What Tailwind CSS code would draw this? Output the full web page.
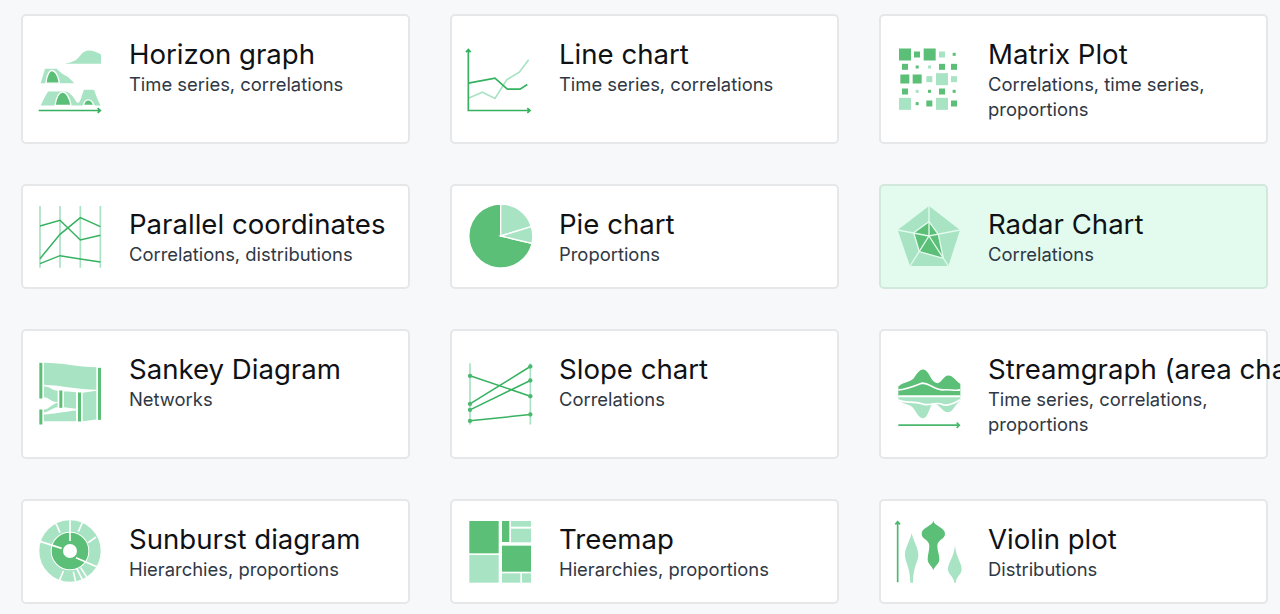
<!DOCTYPE html>
<html>
<head>
<meta charset="utf-8">
<script src="https://cdn.jsdelivr.net/npm/@tailwindcss/browser@4"></script>
</head>
<body class="bg-[#f7f8fa] overflow-hidden h-[614px] font-['Inter',sans-serif]">
<div class="grid grid-cols-[389px_389px_389px] gap-x-[40px] gap-y-[40px] pl-[21px] pt-[14px] w-[1300px]">

<div class="flex items-start gap-[21px] pl-[13px] pr-[15px] pb-[20px] bg-white border-2 border-[#e5e7e9] rounded-[5px] min-w-0">
<svg class="self-center shrink-0 w-[72px] h-[72px] -mb-[20px]" viewBox="48 97.5 216 216"><g fill="#a8e3c3"><path d="M135 160C160 155 170 150 185 130C195 118 215 115 243 132V160Z"/><path d="M62 218L75 175H110C125 190 135 195 145 200L163 218Z"/><path d="M62 285C70 270 78 250 85 243H130C150 240 160 260 170 275C180 285 185 255 192 238H222C230 260 235 275 242 285Z"/></g><g fill="#5bbf77" stroke="#fff" stroke-width="4"><path d="M78 218C80 190 90 180 95 180C105 180 115 195 118 218Z"/><path d="M105 285C110 255 120 245 128 245C140 245 150 265 153 285Z"/><path d="M190 285C193 270 200 268 205 268C212 268 218 275 222 285Z"/></g><path d="M56 300H240M233 293l8 7-8 7" fill="none" stroke="#35b160" stroke-width="5"/></svg>
<div class="min-w-0 pt-[21px]"><div class="text-[27.6px] leading-[35px] text-[#0f1115] whitespace-nowrap">Horizon graph</div><div class="text-[18.4px] leading-[25px] text-[#303844]">Time series, correlations</div></div>
</div>

<div class="flex items-start gap-[22px] pl-[13px] pr-[15px] pb-[20px] bg-white border-2 border-[#e5e7e9] rounded-[5px] min-w-0">
<svg class="self-center shrink-0 w-[72px] h-[72px] -mb-[20px]" viewBox="45 37.5 216 216"><path d="M55 203L97 185L135 204L170 148L208 125L236 88" fill="none" stroke="#a8e3c3" stroke-width="5"/><path d="M55 158L135 143L172 176H210L232 162" fill="none" stroke="#35b160" stroke-width="5"/><path d="M48 65l7-8 7 8M55 58V240H240M232 233l8 7-8 7" fill="none" stroke="#35b160" stroke-width="5"/></svg>
<div class="min-w-0 pt-[21px]"><div class="text-[27.6px] leading-[35px] text-[#0f1115] whitespace-nowrap">Line chart</div><div class="text-[18.4px] leading-[25px] text-[#303844]">Time series, correlations</div></div>
</div>

<div class="flex items-start gap-[22px] pl-[13px] pr-[15px] pb-[20px] bg-white border-2 border-[#e5e7e9] rounded-[5px] min-w-0">
<svg class="self-center shrink-0 w-[72px] h-[72px] -mb-[20px]" viewBox="42 37.5 216 216"><g fill="#5bbf77"><rect x="57" y="54" width="36" height="36"/><rect x="102" y="63" width="18" height="18"/><rect x="131" y="54" width="36" height="36"/><rect x="218" y="67" width="9" height="9"/><rect x="66" y="100" width="18" height="18"/><rect x="107" y="105" width="9" height="9"/><rect x="177" y="100" width="18" height="18"/><rect x="213" y="100" width="18" height="18"/><rect x="61" y="132" width="27" height="27"/><rect x="98" y="132" width="27" height="27"/><rect x="66" y="174" width="18" height="18"/><rect x="144" y="178" width="9" height="9"/><rect x="177" y="174" width="18" height="18"/><rect x="218" y="178" width="9" height="9"/><rect x="107" y="215" width="9" height="9"/><rect x="139" y="210" width="18" height="18"/><rect x="213" y="210" width="18" height="18"/></g><g fill="#a8e3c3"><rect x="177" y="63" width="18" height="18"/><rect x="144" y="105" width="9" height="9"/><rect x="139" y="137" width="18" height="18"/><rect x="168" y="128" width="36" height="36"/><rect x="213" y="137" width="18" height="18"/><rect x="107" y="178" width="9" height="9"/><rect x="57" y="202" width="36" height="36"/><rect x="168" y="202" width="36" height="36"/></g></svg>
<div class="min-w-0 pt-[21px]"><div class="text-[27.6px] leading-[35px] text-[#0f1115] whitespace-nowrap">Matrix Plot</div><div class="text-[18.4px] leading-[25px] text-[#303844]">Correlations, time series, proportions</div></div>
</div>

<div class="flex items-start gap-[21px] pl-[13px] pr-[15px] pb-[20px] bg-white border-2 border-[#e5e7e9] rounded-[5px] min-w-0">
<svg class="self-center shrink-0 w-[72px] h-[72px] -mb-[20px]" viewBox="48 30 216 216"><path d="M60 45V230M120 45V230M181 45V230M241 45V230" fill="none" stroke="#a8e3c3" stroke-width="5"/><path d="M60 105L120 88L181 147L241 133M60 203L120 130L181 80L241 107M60 218L120 194L181 204L241 213" fill="none" stroke="#35b160" stroke-width="4.5"/></svg>
<div class="min-w-0 pt-[21px]"><div class="text-[27.6px] leading-[35px] text-[#0f1115] whitespace-nowrap">Parallel coordinates</div><div class="text-[18.4px] leading-[25px] text-[#303844]">Correlations, distributions</div></div>
</div>

<div class="flex items-start gap-[22px] pl-[13px] pr-[15px] pb-[20px] bg-white border-2 border-[#e5e7e9] rounded-[5px] min-w-0">
<svg class="self-center shrink-0 w-[72px] h-[72px] -mb-[20px]" viewBox="45 30 216 216"><g stroke="#fff" stroke-width="4"><path d="M152 135L246 157A96 96 0 1 1 152 39Z" fill="#5bbf77"/><path d="M152 135V39A96 96 0 0 1 244 107Z" fill="#a8e3c3"/><path d="M152 135L244 107A96 96 0 0 1 246 157Z" fill="#a8e3c3"/></g></svg>
<div class="min-w-0 pt-[21px]"><div class="text-[27.6px] leading-[35px] text-[#0f1115] whitespace-nowrap">Pie chart</div><div class="text-[18.4px] leading-[25px] text-[#303844]">Proportions</div></div>
</div>

<div class="flex items-start gap-[22px] pl-[13px] pr-[15px] pb-[20px] bg-[#e2fbee] border-2 border-[#d2e8dc] rounded-[5px] min-w-0">
<svg class="self-center shrink-0 w-[72px] h-[72px] -mb-[20px]" viewBox="57 60 216 216"><path d="M162 75L255 147L220 255H105L68 147Z" fill="#a8e3c3"/><path d="M162 122L190 160L205 232L133 212L116 155Z" fill="#5bbf77" stroke="#e2fbee" stroke-width="4"/><path d="M162 75V165L255 147M162 165L220 255M162 165L105 255M162 165L68 147" fill="none" stroke="#e2fbee" stroke-width="4"/></svg>
<div class="min-w-0 pt-[21px]"><div class="text-[27.6px] leading-[35px] text-[#0f1115] whitespace-nowrap">Radar Chart</div><div class="text-[18.4px] leading-[25px] text-[#303844]">Correlations</div></div>
</div>

<div class="flex items-start gap-[21px] pl-[13px] pr-[15px] pb-[20px] bg-white border-2 border-[#e5e7e9] rounded-[5px] min-w-0">
<svg class="self-center shrink-0 w-[72px] h-[72px] -mb-[20px]" viewBox="48 22.5 216 216"><g fill="#5bbf77"><rect x="58" y="37" width="9" height="107"/><rect x="58" y="177" width="9" height="45"/><rect x="118" y="120" width="9" height="52"/><rect x="174" y="126" width="9" height="87"/><rect x="234" y="52" width="9" height="156"/></g><g fill="#a8e3c3"><path d="M72 37V103C130 105 170 118 229 118V50C170 50 130 37 72 37Z"/><path d="M72 107C95 110 95 120 113 120V155C95 155 85 140 72 140Z"/><path d="M72 178C90 175 95 160 113 157V170C95 172 90 182 72 186Z"/><path d="M72 192C100 190 130 185 168 180V212H72Z"/><path d="M132 123C145 122 155 125 168 125V175L132 170Z"/><path d="M188 127L229 121V207L188 212Z"/></g></svg>
<div class="min-w-0 pt-[21px]"><div class="text-[27.6px] leading-[35px] text-[#0f1115] whitespace-nowrap">Sankey Diagram</div><div class="text-[18.4px] leading-[25px] text-[#303844]">Networks</div></div>
</div>

<div class="flex items-start gap-[22px] pl-[13px] pr-[15px] pb-[20px] bg-white border-2 border-[#e5e7e9] rounded-[5px] min-w-0">
<svg class="self-center shrink-0 w-[72px] h-[72px] -mb-[20px]" viewBox="45 22.5 216 216"><path d="M60 38V222M241 38V222" fill="none" stroke="#a8e3c3" stroke-width="5"/><path d="M60 76L241 137M60 160L241 48M60 178L241 90M60 211L241 192" fill="none" stroke="#35b160" stroke-width="4.5"/><g fill="#4ab96e"><circle cx="60" cy="76" r="6.5"/><circle cx="60" cy="160" r="6.5"/><circle cx="60" cy="178" r="6.5"/><circle cx="60" cy="211" r="6.5"/><circle cx="241" cy="48" r="6.5"/><circle cx="241" cy="90" r="6.5"/><circle cx="241" cy="137" r="6.5"/><circle cx="241" cy="192" r="6.5"/></g></svg>
<div class="min-w-0 pt-[21px]"><div class="text-[27.6px] leading-[35px] text-[#0f1115] whitespace-nowrap">Slope chart</div><div class="text-[18.4px] leading-[25px] text-[#303844]">Correlations</div></div>
</div>

<div class="flex items-start gap-[22px] pl-[13px] pr-[15px] pb-[20px] bg-white border-2 border-[#e5e7e9] rounded-[5px] min-w-0">
<svg class="self-center shrink-0 w-[72px] h-[72px] -mb-[20px]" viewBox="42 22.5 216 216"><path d="M55 108C70 95 90 95 100 85C110 70 120 55 130 57C150 60 150 95 172 98C185 98 190 75 205 75C220 75 230 95 241 100V137H55Z" fill="#5bbf77"/><path d="M55 140H241V150C225 160 220 185 205 185C185 185 180 160 160 158C150 160 145 205 128 203C110 200 105 170 90 165C75 160 65 155 55 150Z" fill="#a8e3c3"/><path d="M55 118C75 118 100 108 125 98C150 98 165 120 190 118C210 116 225 122 241 118M55 137H241M55 148C75 160 100 150 125 160C150 170 165 150 190 163C210 168 225 155 241 148" fill="none" stroke="#fff" stroke-width="5"/><path d="M55 224H238M230 216l8 8-8 8" fill="none" stroke="#4ab96e" stroke-width="5"/></svg>
<div class="min-w-0 pt-[21px]"><div class="text-[27.6px] leading-[35px] text-[#0f1115] whitespace-nowrap">Streamgraph (area chart)</div><div class="text-[18.4px] leading-[25px] text-[#303844]">Time series, correlations, proportions</div></div>
</div>

<div class="flex items-start gap-[21px] pl-[13px] pr-[15px] pb-[20px] bg-white border-2 border-[#e5e7e9] rounded-[5px] min-w-0">
<svg class="self-center shrink-0 w-[72px] h-[72px] -mb-[20px]" viewBox="48 15 216 216"><circle cx="150" cy="120" r="75" fill="none" stroke="#a8e3c3" stroke-width="34"/><circle cx="150" cy="120" r="38" fill="none" stroke="#5bbf77" stroke-width="34"/><path d="M150 28V90M108 38L120 65M60 91L125 112M187 35L175 62M228 78L205 95M232 168L168 140M200 198L182 170M187 205L170 172M167 212L160 182M118 210L130 180" fill="none" stroke="#fff" stroke-width="5"/></svg>
<div class="min-w-0 pt-[21px]"><div class="text-[27.6px] leading-[35px] text-[#0f1115] whitespace-nowrap">Sunburst diagram</div><div class="text-[18.4px] leading-[25px] text-[#303844]">Hierarchies, proportions</div></div>
</div>

<div class="flex items-start gap-[22px] pl-[13px] pr-[15px] pb-[20px] bg-white border-2 border-[#e5e7e9] rounded-[5px] min-w-0">
<svg class="self-center shrink-0 w-[72px] h-[72px] -mb-[20px]" viewBox="45 15 216 216"><g fill="#5bbf77"><rect x="58" y="30" width="88" height="97"/><rect x="156" y="30" width="22" height="63"/><rect x="156" y="104" width="87" height="78"/></g><g fill="#a8e3c3"><rect x="58" y="132" width="88" height="83"/><rect x="183" y="30" width="60" height="17"/><rect x="183" y="53" width="60" height="41"/><rect x="156" y="187" width="55" height="28"/><rect x="216" y="187" width="27" height="28"/></g></svg>
<div class="min-w-0 pt-[21px]"><div class="text-[27.6px] leading-[35px] text-[#0f1115] whitespace-nowrap">Treemap</div><div class="text-[18.4px] leading-[25px] text-[#303844]">Hierarchies, proportions</div></div>
</div>

<div class="flex items-start gap-[22px] pl-[13px] pr-[15px] pb-[20px] bg-white border-2 border-[#e5e7e9] rounded-[5px] min-w-0">
<svg class="self-center shrink-0 w-[72px] h-[72px] -mb-[20px]" viewBox="42 15 216 216"><path d="M53 214V32M46 40l7-8 7 8" fill="none" stroke="#4ab96e" stroke-width="5"/><path d="M95 67C100 90 117 115 115 135C113 155 100 165 99 215H91C90 165 75 155 75 130C75 110 90 90 95 67Z" fill="#a8e3c3"/><path d="M160 30C163 45 195 50 195 68C195 85 172 85 172 105C172 120 178 130 178 145C178 160 163 165 160 178C157 165 143 160 143 145C143 130 148 120 148 105C148 85 125 85 125 68C125 50 157 45 160 30Z" fill="#5bbf77"/><path d="M225 103C228 140 245 155 245 175C245 190 230 195 227 215H223C220 195 204 190 204 175C204 155 222 140 225 103Z" fill="#a8e3c3"/></svg>
<div class="min-w-0 pt-[21px]"><div class="text-[27.6px] leading-[35px] text-[#0f1115] whitespace-nowrap">Violin plot</div><div class="text-[18.4px] leading-[25px] text-[#303844]">Distributions</div></div>
</div>

</div>
</body>
</html>
